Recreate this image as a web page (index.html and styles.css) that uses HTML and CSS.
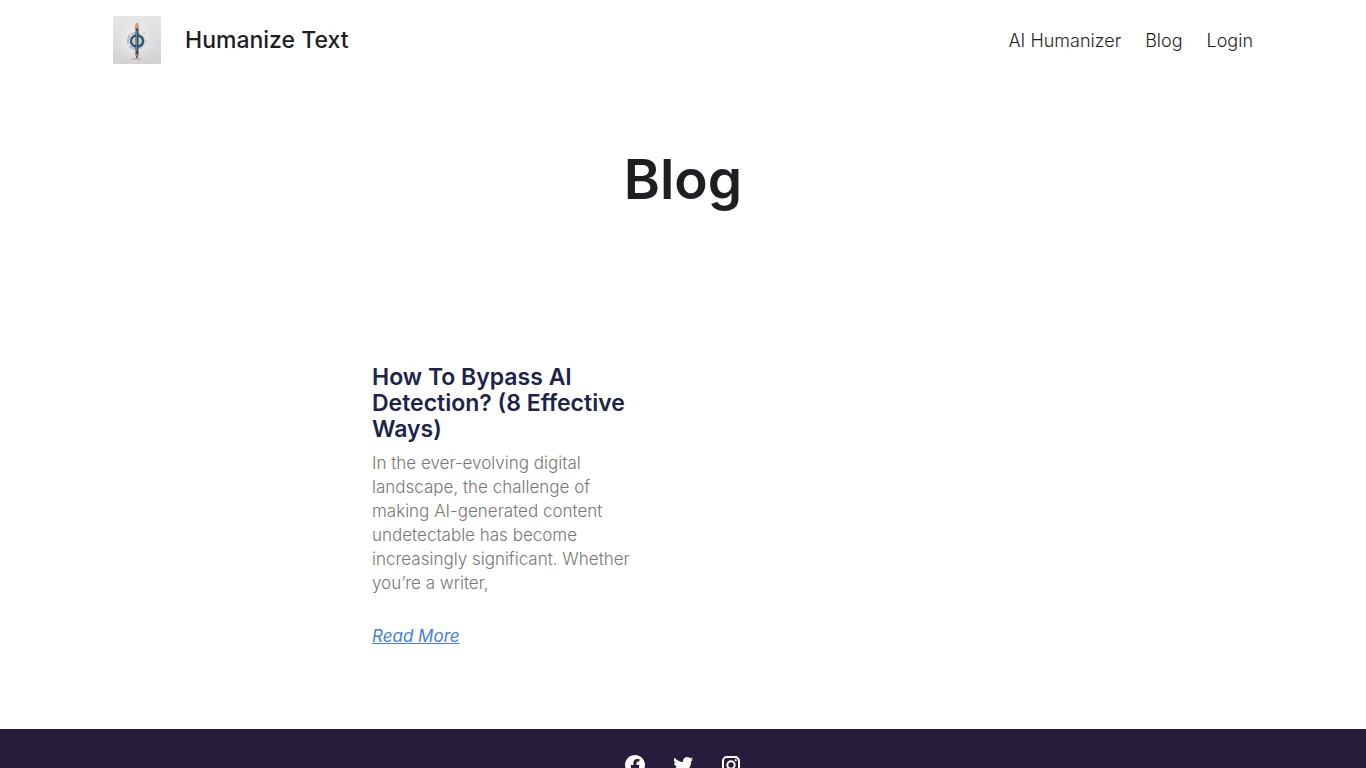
FILE: index.html
```html
<!DOCTYPE html>
<html lang="en">
<head>
  <meta charset="UTF-8">
  <meta name="viewport" content="width=device-width, initial-scale=1.0">
  <title>Blog - Humanize Text</title>
  <link rel="stylesheet" href="styles.css">
</head>
<body>
  <header class="site-header">
    <div class="brand">
      <a class="logo" href="#" aria-label="Humanize Text home">
        <svg width="48" height="48" viewBox="0 0 48 48" aria-hidden="true">
          <defs>
            <linearGradient id="logo-bg" x1="0" y1="0" x2="0" y2="1">
              <stop offset="0" stop-color="#e6e6e8"/>
              <stop offset="1" stop-color="#d2d2d5"/>
            </linearGradient>
            <radialGradient id="logo-glow">
              <stop offset="0" stop-color="#f6f6f7"/>
              <stop offset="1" stop-color="#e4e4e6" stop-opacity="0"/>
            </radialGradient>
          </defs>
          <rect width="48" height="48" fill="url(#logo-bg)"/>
          <circle cx="22" cy="24" r="23" fill="url(#logo-glow)"/>
          <ellipse cx="24" cy="43" rx="5" ry="1" fill="#b8b3b3"/>
          <circle cx="23" cy="25" r="8" fill="none" stroke="#a5bdc8" stroke-width="2" stroke-dasharray="9 2"/>
          <circle cx="24" cy="25" r="6" fill="#c0ced5" stroke="#3c7890" stroke-width="2"/>
          <path d="M23 20a5 5 0 1 0 0 10M25 20a5 5 0 0 1 0 10" fill="none" stroke="#285369" stroke-width="2"/>
          <path d="M15 20l4-3M14 27h3M30 18l2-2M31 25h3" stroke="#dfb18d" stroke-width="1"/>
          <path d="M23 10l1-3 1 3v29l-1 3-1-3z" fill="#454654" stroke="#454654" stroke-width="1"/>
          <path d="M23 12v-3l1-2 1 2v3z" fill="#dc9a6b" stroke="#dc9a6b" stroke-width="1"/>
          <path d="M23 15h1v20h-1z" fill="#73818e"/>
          <path d="M23 38h2l-1 4z" fill="#b18c79"/>
        </svg>
      </a>
      <a class="site-title" href="#">Humanize Text</a>
    </div>
    <nav class="main-nav" aria-label="Main">
      <a href="#">AI Humanizer</a>
      <a href="#">Blog</a>
      <a href="#">Login</a>
    </nav>
  </header>

  <main>
    <h1 class="page-title">Blog</h1>
    <div class="posts">
      <article class="post">
        <h2 class="post-title"><a href="#">How To Bypass AI Detection? (8 Effective Ways)</a></h2>
        <p class="excerpt">In the ever-evolving digital landscape, the challenge of making AI-generated content undetectable has become increasingly significant. Whether you’re a writer,</p>
        <a class="read-more" href="#">Read More</a>
      </article>
    </div>
  </main>

  <footer class="site-footer">
    <a href="#" aria-label="Facebook">
      <svg width="24" height="24" viewBox="0 0 24 24" fill="currentColor" aria-hidden="true"><path d="M12 2C6.5 2 2 6.5 2 12c0 5 3.7 9.1 8.4 9.9v-7H7.9V12h2.5V9.8c0-2.5 1.5-3.9 3.8-3.9 1.1 0 2.2.2 2.2.2v2.5h-1.3c-1.2 0-1.6.8-1.6 1.6V12h2.8l-.4 2.9h-2.3v7C18.3 21.1 22 17 22 12c0-5.5-4.5-10-10-10z"/></svg>
    </a>
    <a href="#" aria-label="Twitter">
      <svg width="24" height="24" viewBox="0 0 24 24" fill="currentColor" aria-hidden="true"><path d="M22.23 5.92c-.74.33-1.53.55-2.36.65.85-.51 1.5-1.31 1.8-2.27-.79.47-1.67.81-2.6 1A4.1 4.1 0 0 0 12.08 9.04c-3.41-.17-6.43-1.8-8.46-4.29a4.1 4.1 0 0 0 1.27 5.48c-.67-.02-1.3-.21-1.86-.51v.05c0 1.99 1.41 3.65 3.29 4.02a4.1 4.1 0 0 1-1.85.07 4.1 4.1 0 0 0 3.83 2.85A8.23 8.23 0 0 1 2.22 18.41a11.6 11.6 0 0 0 6.29 1.84c7.55 0 11.67-6.25 11.67-11.67l-.01-.53c.8-.58 1.5-1.3 2.06-2.13z"/></svg>
    </a>
    <a href="#" aria-label="Instagram">
      <svg width="24" height="24" viewBox="0 0 24 24" fill="none" stroke="currentColor" stroke-width="2" aria-hidden="true"><rect x="4" y="4" width="16" height="16" rx="4"/><circle cx="12" cy="12" r="3.7"/><circle cx="16.8" cy="7.2" r="1.1" fill="currentColor" stroke="none"/></svg>
    </a>
  </footer>
</body>
</html>
```

FILE: styles.css
```css
* {
  box-sizing: border-box;
}
body {
  margin: 0;
  background-color: #fff;
  color: #1e1e23;
  font-family: Inter, "Open Sans", sans-serif;
}
a {
  color: inherit;
  text-decoration: none;
}
.site-header {
  display: flex;
  align-items: center;
  justify-content: space-between;
  max-width: 1140px;
  margin: 0 auto;
  padding: 16px 0;
}
.brand {
  display: flex;
  align-items: center;
  gap: 24px;
}
.logo svg,
.site-footer svg {
  display: block;
}
.site-title {
  font-size: 23px;
  font-weight: 500;
}
.main-nav {
  display: flex;
  gap: 24px;
  font-size: 18px;
  font-weight: 300;
}
.page-title {
  margin: 64px 0 0;
  font-size: 55px;
  font-weight: 600;
  line-height: 70px;
  text-align: center;
}
.posts {
  display: grid;
  grid-template-columns: 1fr 1fr;
  gap: 90px;
  max-width: 622px;
  margin: 0 auto;
  padding: 150px 0 81px;
}
.post-title {
  margin: 0 0 9px;
  color: #1c244b;
  font-size: 23px;
  font-weight: 600;
  line-height: 26px;
}
.excerpt {
  margin: 0 0 29px;
  color: #777;
  font-size: 17px;
  font-weight: 300;
  line-height: 24px;
}
.read-more {
  color: #467fd7;
  font-size: 17px;
  font-style: italic;
  font-weight: 400;
  line-height: 24px;
  text-decoration: underline;
}
.site-footer {
  display: flex;
  justify-content: center;
  gap: 24px;
  padding: 24px 0;
  background-color: #271c3b;
  color: #fff;
}
```
